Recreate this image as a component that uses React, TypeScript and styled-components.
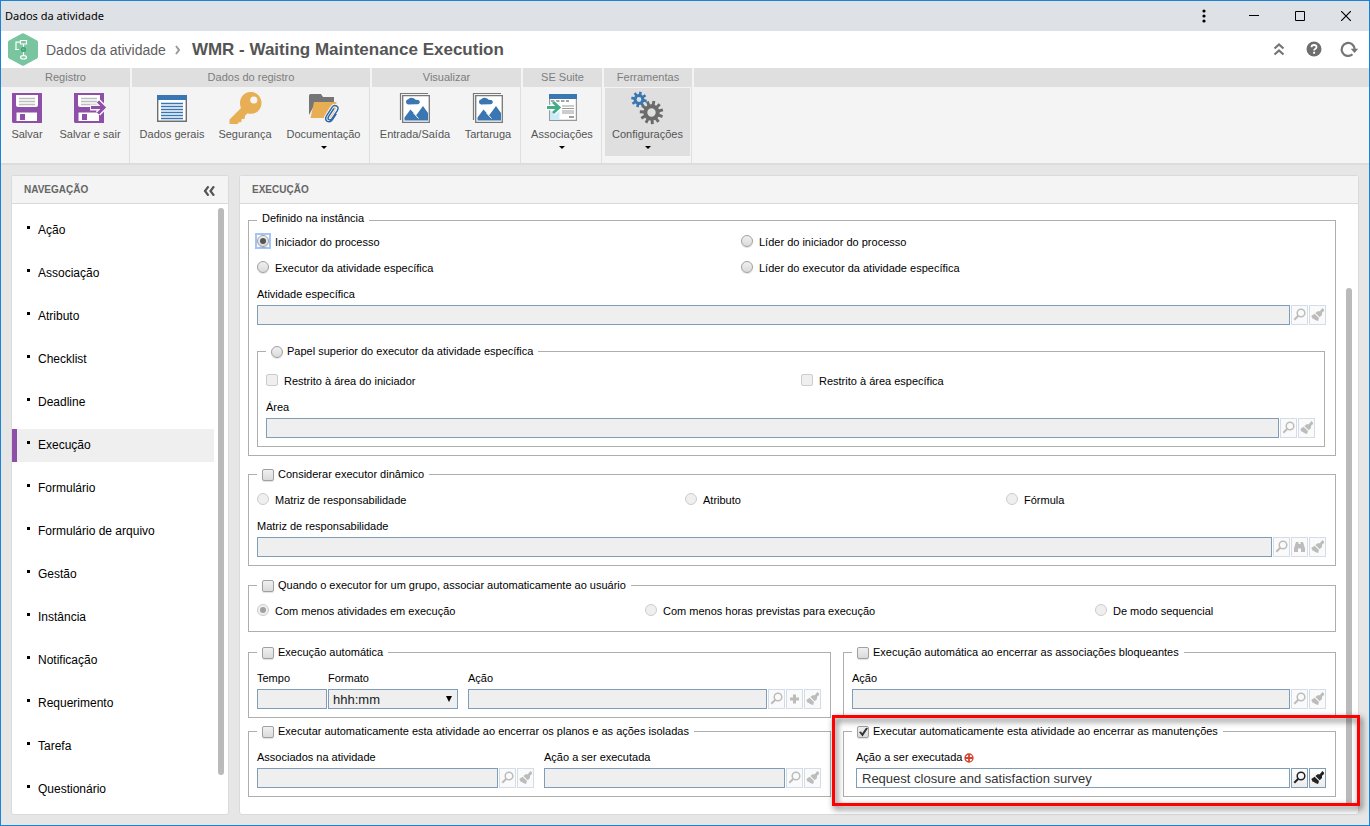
import React from "react";
import styled, { createGlobalStyle, css } from "styled-components";

const GlobalStyle = createGlobalStyle`
  * { box-sizing: border-box; }
  body { margin: 0; font-family: "Liberation Sans", Arial, sans-serif; font-size: 11px; color: #000; }
  button, input, select { font-family: inherit; }
`;

/* ---------- window frame ---------- */

const Window = styled.div`
  display: flex;
  flex-direction: column;
  min-height: 100vh;
  border: 1px solid #1883d7;
  background: #e6e6e6;
`;

const TitleBar = styled.div`
  display: flex;
  align-items: center;
  height: 30px;
  padding-left: 4px;
  background: #dee1e6;
`;

const WindowTitle = styled.span`
  flex: 1;
  padding-bottom: 2px;
  font-family: "Noto Sans", sans-serif;
  font-size: 11px;
`;

const WindowButton = styled.button<{ $menu?: boolean }>`
  display: flex;
  align-items: center;
  justify-content: center;
  width: ${(p) => (p.$menu ? 28 : 46)}px;
  height: 30px;
  margin-right: ${(p) => (p.$menu ? 13 : 0)}px;
  padding: 0;
  border: 0;
  background: none;
`;

const PageHeader = styled.header`
  display: flex;
  align-items: center;
  height: 37px;
  padding: 0 10px 0 7px;
  background: #fff;
  color: #5a5a5a;
`;

const Crumb = styled.a`
  margin-left: 8px;
  color: #5f5f5f;
  font-size: 14px;
  text-decoration: none;
`;

const CrumbArrow = styled.svg`
  margin: 0 11px 0 9px;
`;

const PageTitle = styled.h1`
  flex: 1;
  margin: 0;
  color: #555;
  font-size: 17px;
  line-height: 20px;
`;

const HeaderButton = styled.button`
  display: flex;
  margin-left: 15px;
  padding: 0 0 1px;
  border: 0;
  background: none;
`;

/* ---------- ribbon ---------- */

const Ribbon = styled.div`
  display: flex;
  gap: 2px;
  border-bottom: 2px solid #dcdcdc;
  background: #f4f4f4;
`;

const RibbonGroup = styled.section<{ $fill?: boolean }>`
  display: flex;
  flex-direction: column;
  flex: ${(p) => (p.$fill ? "1" : "none")};
`;

const RibbonTitle = styled.h2`
  height: 19px;
  margin: 0;
  background: #dfdfdf;
  color: #7d7d7d;
  font-size: 11px;
  font-weight: normal;
  line-height: 19px;
  text-align: center;
`;

const RibbonBody = styled.div<{ $fill?: boolean }>`
  display: flex;
  height: 76px;
  padding: 1px 1px 0;
  border-right: ${(p) => (p.$fill ? "0" : "1px solid #dfdfdf")};
`;

const RibbonButton = styled.button<{ $width: number; $active?: boolean }>`
  display: flex;
  flex-direction: column;
  align-items: center;
  width: ${(p) => p.$width}px;
  height: 68px;
  padding: 3px 0 0;
  border: 0;
  background: ${(p) => (p.$active ? "#dfdfdf" : "none")};
  color: #555;
  font-size: 11px;
  line-height: 19px;
  white-space: nowrap;
`;

const Caret = styled.span`
  width: 0;
  height: 0;
  margin-top: 2px;
  border: 3px solid transparent;
  border-top-color: #000;
  border-bottom: 0;
`;

/* ---------- panels ---------- */

const Workspace = styled.div`
  display: flex;
  flex: 1;
  gap: 10px;
  padding: 10px;
`;

const Panel = styled.section<{ $width?: number }>`
  display: flex;
  flex-direction: column;
  ${(p) => (p.$width ? css`flex: none; width: ${p.$width}px;` : css`flex: 1; min-width: 0;`)}
  border: 1px solid #dadada;
  border-radius: 3px;
  background: #fff;
`;

const PanelHeader = styled.div`
  display: flex;
  align-items: center;
  justify-content: space-between;
  height: 28px;
  padding: 0 13px 0 12px;
  border-bottom: 1px solid #dadada;
  background: #f4f4f4;
`;

const PanelTitle = styled.h2`
  margin: 0;
  color: #666;
  font-size: 10px;
`;

const CollapseButton = styled.button`
  display: flex;
  padding: 2px 0 0;
  border: 0;
  background: none;
`;

const PanelBody = styled.div`
  display: flex;
  flex: 1;
`;

const Thumb = styled.div<{ $top: number; $bottom: number; $right: number }>`
  flex: none;
  width: 6px;
  margin: ${(p) => `${p.$top}px ${p.$right}px ${p.$bottom}px 0`};
  border-radius: 3px;
  background: #bababa;
`;

const NavList = styled.ul`
  display: flex;
  flex: 1;
  flex-direction: column;
  gap: 10px;
  margin: 0;
  padding: 10px 4px 8px 0;
  list-style: none;
`;

const NavItem = styled.a<{ $active?: boolean }>`
  display: flex;
  align-items: center;
  height: 33px;
  padding: 0 0 2px ${(p) => (p.$active ? 10 : 15)}px;
  border-left: ${(p) => (p.$active ? "5px solid #8e4fa8" : "0")};
  background: ${(p) => (p.$active ? "#efefef" : "none")};
  color: #000;
  font-size: 12px;
  text-decoration: none;
  &::before {
    width: 3px;
    height: 3px;
    margin: 0 8px 4px 0;
    background: #000;
    content: "";
  }
`;

/* ---------- form ---------- */

const Form = styled.form`
  flex: 1;
  min-width: 0;
  padding: 9px 10px 17px 8px;
`;

const Fieldset = styled.fieldset<{ $gap?: number; $inset?: number }>`
  min-width: 0;
  margin: ${(p) => p.$gap ?? 0}px 0 0;
  padding: ${(p) => p.$inset ?? 4}px 9px 8px 8px;
  border: 1px solid #aeaeae;
`;

const SubFieldset = styled(Fieldset)`
  margin-right: 1px;
`;

const Legend = styled.legend`
  height: 15px;
  padding: 0 5px;
  line-height: 10px;
`;

const LegendLabel = styled.label`
  display: flex;
  gap: 4px;
  line-height: 14px;
  white-space: nowrap;
  input { margin-top: 2px; }
`;

const OptionGrid = styled.div<{ $columns: string }>`
  display: grid;
  grid-template-columns: ${(p) => p.$columns};
  grid-auto-rows: 26px;
`;

const Tick = styled.input`
  flex: none;
  width: 12px;
  height: 12px;
  margin: 0;
  appearance: none;
  border: 1px solid #a0a0a0;
  border-radius: ${(p) => (p.type === "radio" ? "50%" : "2px")};
  background: linear-gradient(#f0f0f0, #dadada);
  box-shadow: 0 1px 1px rgba(0, 0, 0, 0.12);
  &:disabled {
    border-color: #ccc;
    background: #efefef;
    box-shadow: none;
  }
  &[type="radio"]:checked::after {
    display: block;
    width: 6px;
    height: 6px;
    margin: 2px;
    border-radius: 50%;
    background: #555;
    content: "";
  }
  &[type="radio"]:disabled:checked::after { background: #a0a0a0; }
  &[type="checkbox"]:checked::after {
    display: block;
    width: 10px;
    height: 10px;
    background: #333;
    clip-path: polygon(10% 50%, 30% 45%, 42% 62%, 80% 8%, 100% 12%, 45% 95%);
    content: "";
  }
`;

const FocusRing = styled.span`
  display: flex;
  margin: -1px;
  outline: 1px solid #a3c3fb;
  border: 1px solid #a3c3fb;
  background: #fff;
`;

const Option = styled.label`
  display: flex;
  align-items: center;
  gap: 6px;
  padding-top: 2px;
  white-space: nowrap;
  > ${Tick} { margin-bottom: 2px; }
  > ${FocusRing} { margin-bottom: 1px; }
`;

const Fields = styled.div<{ $indent?: number }>`
  display: flex;
  gap: 10px;
  padding-left: ${(p) => p.$indent ?? 0}px;
`;

const PairedFields = styled(Fields)`
  flex: none;
  gap: 1px;
`;

const Field = styled.div<{ $width?: number }>`
  ${(p) => (p.$width ? css`flex: none; width: ${p.$width}px;` : css`flex: 1; min-width: 0;`)}
`;

const FieldLabel = styled.label`
  display: flex;
  align-items: center;
  height: 25px;
  padding-top: 2px;
  white-space: nowrap;
`;

const Controls = styled.div`
  display: flex;
  gap: 1px;
`;

const boxed = css`
  width: 100%;
  min-width: 0;
  height: 20px;
  border: 1px solid #7f9db9;
  border-radius: 0;
  color: #333;
  font-size: 13px;
`;

const TextInput = styled.input`
  ${boxed}
  flex: 1;
  padding: 0 5px;
  background: #fff;
  &:disabled { background: #efefef; }
`;

const SelectWrap = styled.div`
  position: relative;
  &::after {
    position: absolute;
    top: 7px;
    right: 6px;
    border: 3px solid transparent;
    border-top: 6px solid #000;
    border-bottom: 0;
    content: "";
    pointer-events: none;
  }
`;

const Select = styled.select`
  ${boxed}
  display: block;
  padding: 0 4px;
  appearance: none;
  background: #efefef;
  color: #222;
  opacity: 1;
`;

const ToolButton = styled.button`
  display: flex;
  flex: none;
  width: 17px;
  height: 20px;
  padding: 0;
  border: 1px solid #7f9db9;
  background: linear-gradient(#fff, #ececec);
  color: #222;
  &:disabled {
    border-color: #d3dde9;
    background: #fafafa;
    color: #bcbcbc;
  }
`;

const Pair = styled.div<{ $gap: number }>`
  display: grid;
  grid-template-columns: minmax(0, 583fr) minmax(0, 493fr);
  gap: 12px;
  margin-top: ${(p) => p.$gap}px;
`;

const Highlighted = styled.div`
  position: relative;
`;

const HighlightFrame = styled.div`
  position: absolute;
  inset: -9px -24px -9px -11px;
  border: 3px solid #fe0000;
  filter: drop-shadow(2px 3px 3px rgba(0, 0, 0, 0.65));
  pointer-events: none;
`;

const RequiredMark = styled.svg`
  margin: 2px 0 0 2px;
`;

/* ---------- ribbon icons ---------- */

const PURPLE = "#8e4fa8";
const BLUE = "#3a76b2";

const Icon = ({ children }: { children: React.ReactNode }) => (
  <svg width="34" height="34" viewBox="0 0 34 34" aria-hidden="true">{children}</svg>
);

const Disk = () => (
  <>
    <path d="M2 2h30v30H3l-1-1z" fill={PURPLE} />
    <path d="M6 4h22v10q0 2-2 2H8q-2 0-2-2z" fill="#fff" />
    <path d="M9 7.500h16M9 10.500h16M9 13.500h16" stroke="#bdbdbd" strokeWidth="1.300" />
    <path d="M6.500 21.500h20.500V30H6.500z" fill="#fff" />
    <path d="M10 23h5v6h-5z" fill={PURPLE} />
  </>
);

const SaveIcon = () => <Icon><Disk /></Icon>;

const SaveExitIcon = () => (
  <Icon>
    <g transform="translate(-1 0)"><Disk /></g>
    <path d="M17 16.500h14M25 10.500l6 6-6 6" fill="none" stroke="#f4f4f4" strokeWidth="6" />
    <path d="M18 16.500h13M25 10.500l6 6-6 6" fill="none" stroke={PURPLE} strokeWidth="3" />
  </Icon>
);

const ListIcon = () => (
  <Icon>
    <path d="M2.700 5h28.600v25.300H2.700z" fill="#fff" stroke="#6e6e6e" strokeWidth="1.400" />
    <path d="M2 4h30v5H2z" fill={BLUE} />
    <path d="M6 12.500h22M6 15.500h22M6 18.500h22M6 21.500h22M6 24.500h22M6 27.500h22" stroke={BLUE} strokeWidth="1.300" />
  </Icon>
);

const KeyIcon = () => (
  <Icon>
    <path
      fillRule="evenodd"
      d="M22.500 1C29 1 33.500 6 33.500 12S29 22.800 23 22.800q-2 0-3.500-.6l-2.500 2.600-.3 3-3 .2-.4 3-3 .4-.5 1.600H1.500v-4.600l11.500-11.500q-1-2.200-1-4.700C12 5.500 17 1 22.500 1zm3.300 4.400a3.600 3.600 0 1 0 0 7.200 3.600 3.600 0 0 0 0-7.200z"
      fill="#e8ae54"
    />
  </Icon>
);

const CLIP = "M27 17.500l-5.500 8q-1.200 2.300.5 3.200 1.700.8 3-1l5.300-8q1.800-3.200-.6-4.700-2.800-1.300-4.700 1.300l-5.500 8.500q-2 4 .8 5.600 3 1.300 5-1.500l4-6";

const FolderIcon = () => (
  <Icon>
    <path d="M2 4.500q0-1.500 1.500-1.500H14l2 3h11v7H8L2 24z" fill="#757575" />
    <path d="M7 11h22.500L27 27H3.500z" fill="#e8ae54" />
    <path d={CLIP} fill="none" stroke="#f4f4f4" strokeWidth="3.500" />
    <path d={CLIP} fill="none" stroke="#2e64a8" strokeWidth="1.400" />
  </Icon>
);

const PictureIcon = () => (
  <Icon>
    <path d="M2.500 29V2.500H30" fill="none" stroke="#777" strokeWidth="1.200" />
    <path d="M4.700 4.700h26.600v26.600H4.700z" fill="#fff" stroke="#777" strokeWidth="1.300" />
    <path d="M10 13.500a2.700 2.700 0 0 1 .3-5.300q1.500-2.200 4.200-1.200 2 .3 3 1.800 4.300-.2 4.300 2.200 0 2.300-3.300 2.300z" fill={BLUE} />
    <path d="M6.500 29.500v-3l6-8 5.500 6 7-9.500 5 7v7.500z" fill={BLUE} />
    <path d="M15.500 22l5 5.500" stroke="#fff" strokeWidth="1" />
  </Icon>
);

const LinkIcon = () => (
  <Icon>
    <path d="M4.600 4h26.800v25.400H4.600z" fill="#fff" stroke="#999" strokeWidth="1.200" />
    <path d="M5 12h9.500v17H5z" fill="#cfeafb" />
    <path d="M4 3h28v5H4z" fill={BLUE} />
    <path d="M6 10h18" stroke="#888" strokeWidth="1.300" strokeDasharray="3.500 1.500" />
    <path d="M17 15h12M17 17.500h12M17 20h12M17 22h12" stroke="#999" strokeWidth="1" />
    <path d="M24 26h5" stroke="#888" strokeWidth="1.600" />
    <path d="M1 16.500h13M8 11l6 5.500L8 22" fill="none" stroke="#fff" strokeWidth="5.500" />
    <path d="M2 16.500h12M8 11l6 5.500L8 22" fill="none" stroke="#45ad83" strokeWidth="3" />
  </Icon>
);

const teeth = (count: number, cx: number, cy: number, inner: number, outer: number, width: number, fill: string) =>
  Array.from({ length: count }, (_, i) => (
    <rect
      key={i}
      x={cx - width / 2}
      y={cy - outer}
      width={width}
      height={outer - inner}
      fill={fill}
      transform={`rotate(${(360 / count) * i + 12} ${cx} ${cy})`}
    />
  ));

const GearsIcon = () => (
  <Icon>
    {teeth(8, 8, 8.500, 4, 7.800, 2.600, BLUE)}
    <circle cx="8" cy="8.500" r="3.900" fill="none" stroke={BLUE} strokeWidth="3" />
    {teeth(11, 20.500, 21.500, 7, 11.700, 2.900, "#6b6b6b")}
    <circle cx="20.500" cy="21.500" r="6.200" fill="none" stroke="#6b6b6b" strokeWidth="4" />
  </Icon>
);

/* ---------- small icons ---------- */

const LensIcon = () => (
  <svg width="15" height="18" viewBox="0 0 15 18" aria-hidden="true">
    <circle cx="9" cy="7" r="3.800" fill="none" stroke="currentColor" strokeWidth="1.500" />
    <path d="M6.300 9.700L2.300 13.700" stroke="currentColor" strokeWidth="2" />
  </svg>
);

const BrushIcon = () => (
  <svg width="15" height="18" viewBox="0 0 15 18" aria-hidden="true" fill="currentColor">
    <path d="M12.400 2l1.800 1.700-.4 1.500-1.800 1.600v2.200L9.700 11.200 5.400 7l2.200-1.800 2.200.1z" />
    <path d="M4.600 7.700l4.400 4.300-.8 2.800-1.500.2-.5-1.300-1.200.6-1-1.500-1.200.2-1.500-3z" />
  </svg>
);

const PlusIcon = () => (
  <svg width="15" height="18" viewBox="0 0 15 18" aria-hidden="true">
    <path d="M7.500 4.500v9M3 9h9" stroke="currentColor" strokeWidth="3" />
  </svg>
);

const BinocularsIcon = () => (
  <svg width="15" height="18" viewBox="0 0 15 18" aria-hidden="true" fill="currentColor">
    <path d="M4 4h2.500v2h2V4H11l.8 2.500 1.200 4V14H9v-3.500H6V14H2v-3.500l1.200-4z" />
  </svg>
);

const tools = {
  search: { label: "Pesquisar", icon: <LensIcon /> },
  find: { label: "Localizar", icon: <BinocularsIcon /> },
  add: { label: "Adicionar", icon: <PlusIcon /> },
  clear: { label: "Limpar", icon: <BrushIcon /> },
};

type Tool = keyof typeof tools;

type LookupProps = {
  id: string;
  label: string;
  actions?: Tool[];
  value?: string;
  width?: number;
  required?: boolean;
};

const Lookup = ({ id, label, actions = ["search", "clear"], value, width, required }: LookupProps) => (
  <Field $width={width}>
    <FieldLabel htmlFor={id}>
      {label}
      {required && (
        <RequiredMark width="10" height="10" viewBox="0 0 10 10" aria-hidden="true">
          <circle cx="5" cy="5" r="4" fill="none" stroke="#d8432e" strokeWidth="1.300" />
          <path d="M5 1v8M1 5h8" stroke="#d8432e" strokeWidth="1.800" />
        </RequiredMark>
      )}
    </FieldLabel>
    <Controls>
      <TextInput id={id} defaultValue={value} disabled={!value} />
      {actions.map((a) => (
        <ToolButton key={a} type="button" aria-label={tools[a].label} disabled={!value}>{tools[a].icon}</ToolButton>
      ))}
    </Controls>
  </Field>
);

const CheckLegend = ({ children, checked }: { children: string; checked?: boolean }) => (
  <Legend>
    <LegendLabel>
      <Tick type="checkbox" defaultChecked={checked} />
      {children}
    </LegendLabel>
  </Legend>
);

const navItems = [
  "Ação", "Associação", "Atributo", "Checklist", "Deadline", "Execução", "Formulário", "Formulário de arquivo",
  "Gestão", "Instância", "Notificação", "Requerimento", "Tarefa", "Questionário",
];

type RibbonItem = { label: string; width: number; icon: React.ReactNode; menu?: boolean; active?: boolean };

const ribbonGroups: { title: string; items: RibbonItem[] }[] = [
  { title: "Registro", items: [
    { label: "Salvar", width: 50, icon: <SaveIcon /> },
    { label: "Salvar e sair", width: 76, icon: <SaveExitIcon /> },
  ] },
  { title: "Dados do registro", items: [
    { label: "Dados gerais", width: 78, icon: <ListIcon /> },
    { label: "Segurança", width: 68, icon: <KeyIcon /> },
    { label: "Documentação", width: 89, icon: <FolderIcon />, menu: true },
  ] },
  { title: "Visualizar", items: [
    { label: "Entrada/Saída", width: 84, icon: <PictureIcon /> },
    { label: "Tartaruga", width: 62, icon: <PictureIcon /> },
  ] },
  { title: "SE Suite", items: [{ label: "Associações", width: 76, icon: <LinkIcon />, menu: true }] },
  { title: "Ferramentas", items: [{ label: "Configurações", width: 85, icon: <GearsIcon />, menu: true, active: true }] },
];

export default function App() {
  return (
    <Window>
      <GlobalStyle />
      <TitleBar>
        <WindowTitle>Dados da atividade</WindowTitle>
        <WindowButton $menu aria-label="Menu">
          <svg width="4" height="14" viewBox="0 0 4 14">
            <circle cx="2" cy="2" r="1.600" /><circle cx="2" cy="7" r="1.600" /><circle cx="2" cy="12" r="1.600" />
          </svg>
        </WindowButton>
        <WindowButton aria-label="Minimizar">
          <svg width="10" height="10" viewBox="0 0 10 10"><path d="M0 4.500h10" stroke="#000" /></svg>
        </WindowButton>
        <WindowButton aria-label="Maximizar">
          <svg width="10" height="10" viewBox="0 0 10 10"><path d="M.5.5h9v9h-9z" fill="none" stroke="#000" /></svg>
        </WindowButton>
        <WindowButton aria-label="Fechar">
          <svg width="10" height="10" viewBox="0 0 10 10"><path d="M0 0l10 10M10 0L0 10" stroke="#000" strokeWidth="1.200" /></svg>
        </WindowButton>
      </TitleBar>

      <PageHeader>
        <svg width="30" height="33" viewBox="0 0 30 33" aria-hidden="true">
          <path d="M14 .4q1-.5 2 0l13 7q1 .6 1 1.800v14.600q0 1.200-1 1.800l-13 7q-1 .5-2 0l-13-7q-1-.6-1-1.800V9.200Q0 8 1 7.400z" fill="#79c59f" />
          <g fill="none" stroke="#fff" strokeWidth="1.200">
            <path d="M12.500 7.500h6v3.500h-6zM12.500 9.200H8v7.300M15.500 11v3M15.500 19v3M7 16.500h4" />
            <ellipse cx="15.500" cy="24.300" rx="3" ry="1.700" />
          </g>
          <circle cx="15.500" cy="16.500" r="1.900" fill="#6dba93" stroke="#3f9d6f" strokeWidth="1.200" />
        </svg>
        <Crumb href="#dados">Dados da atividade</Crumb>
        <CrumbArrow width="6" height="10" viewBox="0 0 6 10" aria-hidden="true">
          <path d="M1 1l3 4-3 4" fill="none" stroke="#999" strokeWidth="2" />
        </CrumbArrow>
        <PageTitle>WMR - Waiting Maintenance Execution</PageTitle>
        <HeaderButton aria-label="Recolher">
          <svg width="20" height="20" viewBox="0 0 20 20">
            <path d="M5.500 9.500L10 5.500l4.500 4M5.500 15.500l4.500-4 4.500 4" fill="none" stroke="#757575" strokeWidth="2.200" />
          </svg>
        </HeaderButton>
        <HeaderButton aria-label="Ajuda">
          <svg width="20" height="20" viewBox="0 0 20 20">
            <circle cx="10" cy="10" r="7.500" fill="#6e6e6e" />
            <path d="M7.500 8.200q.1-2.200 2.500-2.200 2.500 0 2.500 2 0 1.300-1.300 2-1.100.6-1.100 1.600" fill="none" stroke="#fff" strokeWidth="1.800" />
            <path d="M9.100 12.800h2v1.900h-2z" fill="#fff" />
          </svg>
        </HeaderButton>
        <HeaderButton aria-label="Atualizar">
          <svg width="20" height="20" viewBox="0 0 20 20">
            <path d="M13.500 15.300A6.500 6.500 0 1 1 15.700 10.500" fill="none" stroke="#757575" strokeWidth="2.200" />
            <path d="M11.700 9.800h7.500l-3.700 4.200z" fill="#757575" />
          </svg>
        </HeaderButton>
      </PageHeader>

      <Ribbon>
        {ribbonGroups.map((g) => (
          <RibbonGroup key={g.title}>
            <RibbonTitle>{g.title}</RibbonTitle>
            <RibbonBody>
              {g.items.map((b) => (
                <RibbonButton key={b.label} $width={b.width} $active={b.active}>
                  {b.icon}
                  {b.label}
                  {b.menu && <Caret />}
                </RibbonButton>
              ))}
            </RibbonBody>
          </RibbonGroup>
        ))}
        <RibbonGroup $fill>
          <RibbonTitle />
          <RibbonBody $fill />
        </RibbonGroup>
      </Ribbon>

      <Workspace>
        <Panel $width={218}>
          <PanelHeader>
            <PanelTitle>NAVEGAÇÃO</PanelTitle>
            <CollapseButton aria-label="Recolher navegação">
              <svg width="12" height="10" viewBox="0 0 12 10">
                <path d="M5.500.3L2 5l3.500 4.700M11 .3L7.500 5l3.500 4.700" fill="none" stroke="#555" strokeWidth="2.200" />
              </svg>
            </CollapseButton>
          </PanelHeader>
          <PanelBody>
            <NavList>
              {navItems.map((n) => (
                <li key={n}><NavItem href="#item" $active={n === "Execução"}>{n}</NavItem></li>
              ))}
            </NavList>
            <Thumb $top={4} $bottom={39} $right={4} />
          </PanelBody>
        </Panel>

        <Panel>
          <PanelHeader><PanelTitle>EXECUÇÃO</PanelTitle></PanelHeader>
          <PanelBody>
            <Form>
              <Fieldset $inset={0}>
                <Legend>Definido na instância</Legend>
                <OptionGrid $columns="484fr 585fr">
                  <Option>
                    <FocusRing><Tick type="radio" name="definido" defaultChecked /></FocusRing>
                    Iniciador do processo
                  </Option>
                  <Option><Tick type="radio" name="definido" />Líder do iniciador do processo</Option>
                  <Option><Tick type="radio" name="definido" />Executor da atividade específica</Option>
                  <Option><Tick type="radio" name="definido" />Líder do executor da atividade específica</Option>
                </OptionGrid>
                <Lookup id="atividade" label="Atividade específica" />
                <SubFieldset $gap={19} $inset={8}>
                  <Legend>
                    <LegendLabel><Tick type="radio" name="definido" />Papel superior do executor da atividade específica</LegendLabel>
                  </Legend>
                  <OptionGrid $columns="535fr 514fr">
                    <Option><Tick type="checkbox" disabled />Restrito à área do iniciador</Option>
                    <Option><Tick type="checkbox" disabled />Restrito à área específica</Option>
                  </OptionGrid>
                  <Lookup id="area" label="Área" />
                </SubFieldset>
              </Fieldset>

              <Fieldset $gap={11}>
                <CheckLegend>Considerar executor dinâmico</CheckLegend>
                <OptionGrid $columns="428fr 321fr 320fr">
                  <Option><Tick type="radio" name="dinamico" disabled />Matriz de responsabilidade</Option>
                  <Option><Tick type="radio" name="dinamico" disabled />Atributo</Option>
                  <Option><Tick type="radio" name="dinamico" disabled />Fórmula</Option>
                </OptionGrid>
                <Lookup id="matriz" label="Matriz de responsabilidade" actions={["search", "find", "clear"]} />
              </Fieldset>

              <Fieldset $gap={12}>
                <CheckLegend>Quando o executor for um grupo, associar automaticamente ao usuário</CheckLegend>
                <OptionGrid $columns="388fr 450fr 231fr">
                  <Option><Tick type="radio" name="grupo" disabled defaultChecked />Com menos atividades em execução</Option>
                  <Option><Tick type="radio" name="grupo" disabled />Com menos horas previstas para execução</Option>
                  <Option><Tick type="radio" name="grupo" disabled />De modo sequencial</Option>
                </OptionGrid>
              </Fieldset>

              <Pair $gap={13}>
                <Fieldset>
                  <CheckLegend>Execução automática</CheckLegend>
                  <Fields>
                    <PairedFields>
                      <Lookup id="tempo" label="Tempo" width={70} actions={[]} />
                      <Field $width={130}>
                        <FieldLabel htmlFor="formato">Formato</FieldLabel>
                        <SelectWrap>
                          <Select id="formato" disabled><option>hhh:mm</option></Select>
                        </SelectWrap>
                      </Field>
                    </PairedFields>
                    <Lookup id="acao" label="Ação" actions={["search", "add", "clear"]} />
                  </Fields>
                </Fieldset>
                <Fieldset>
                  <CheckLegend>Execução automática ao encerrar as associações bloqueantes</CheckLegend>
                  <Lookup id="acao-bloqueantes" label="Ação" />
                </Fieldset>
              </Pair>

              <Pair $gap={6}>
                <Fieldset>
                  <CheckLegend>Executar automaticamente esta atividade ao encerrar os planos e as ações isoladas</CheckLegend>
                  <Fields>
                    <Lookup id="associados" label="Associados na atividade" />
                    <Lookup id="acao-planos" label="Ação a ser executada" />
                  </Fields>
                </Fieldset>
                <Highlighted>
                  <Fieldset>
                    <CheckLegend checked>Executar automaticamente esta atividade ao encerrar as manutenções</CheckLegend>
                    <Fields $indent={4}>
                      <Lookup id="acao-manutencoes" label="Ação a ser executada" value="Request closure and satisfaction survey" required />
                    </Fields>
                  </Fieldset>
                  <HighlightFrame />
                </Highlighted>
              </Pair>
            </Form>
            <Thumb $top={84} $bottom={8} $right={6} />
          </PanelBody>
        </Panel>
      </Workspace>
    </Window>
  );
}
